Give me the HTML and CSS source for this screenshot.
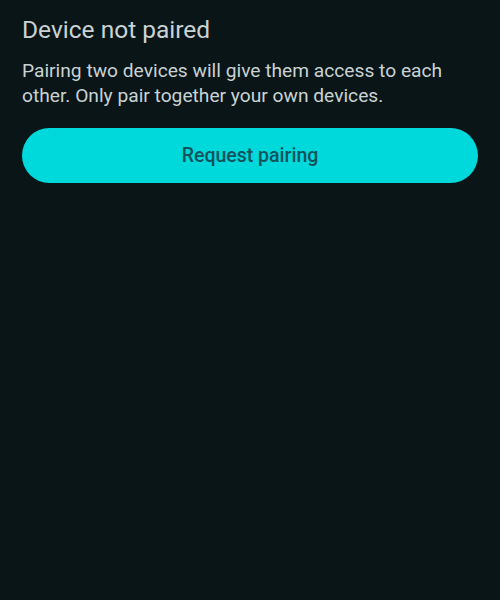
FILE: index.html
```html
<!DOCTYPE html>
<html lang="en">

<head>
    <meta charset="UTF-8">
    <meta name="viewport" content="width=device-width, initial-scale=1.0">
    <title>Device not paired</title>
    <link rel="stylesheet" href="styles.css">
</head>

<body>
    <main class="pairing">
        <h1 class="pairing-title">Device not paired</h1>
        <p class="pairing-text">Pairing two devices will give them access to each other. Only pair together your own devices.</p>
        <button class="pair-button">Request pairing</button>
    </main>
</body>

</html>
```

FILE: styles.css
```css
html,
body {
    margin: 0;
    padding: 0;
    height: 100%;
    background-color: #0a1518;
}

body {
    font-family: Roboto, "Noto Sans", sans-serif;
    color: #c9d3d3;
}

.pairing {
    display: flex;
    flex-direction: column;
    padding: 14px 22px;
}

.pairing-title {
    font-size: 24.5px;
    font-weight: 400;
    line-height: 32px;
    margin: 0;
}

.pairing-text {
    font-size: 19.2px;
    line-height: 25px;
    margin: 12px 0 0 0;
}

.pair-button {
    margin-top: 20px;
    height: 55px;
    border: none;
    border-radius: 28px;
    background-color: #00d9dc;
    color: #12525a;
    font-family: Roboto, "Noto Sans", sans-serif;
    font-size: 19.5px;
    font-weight: 500;
    cursor: pointer;
}
```
